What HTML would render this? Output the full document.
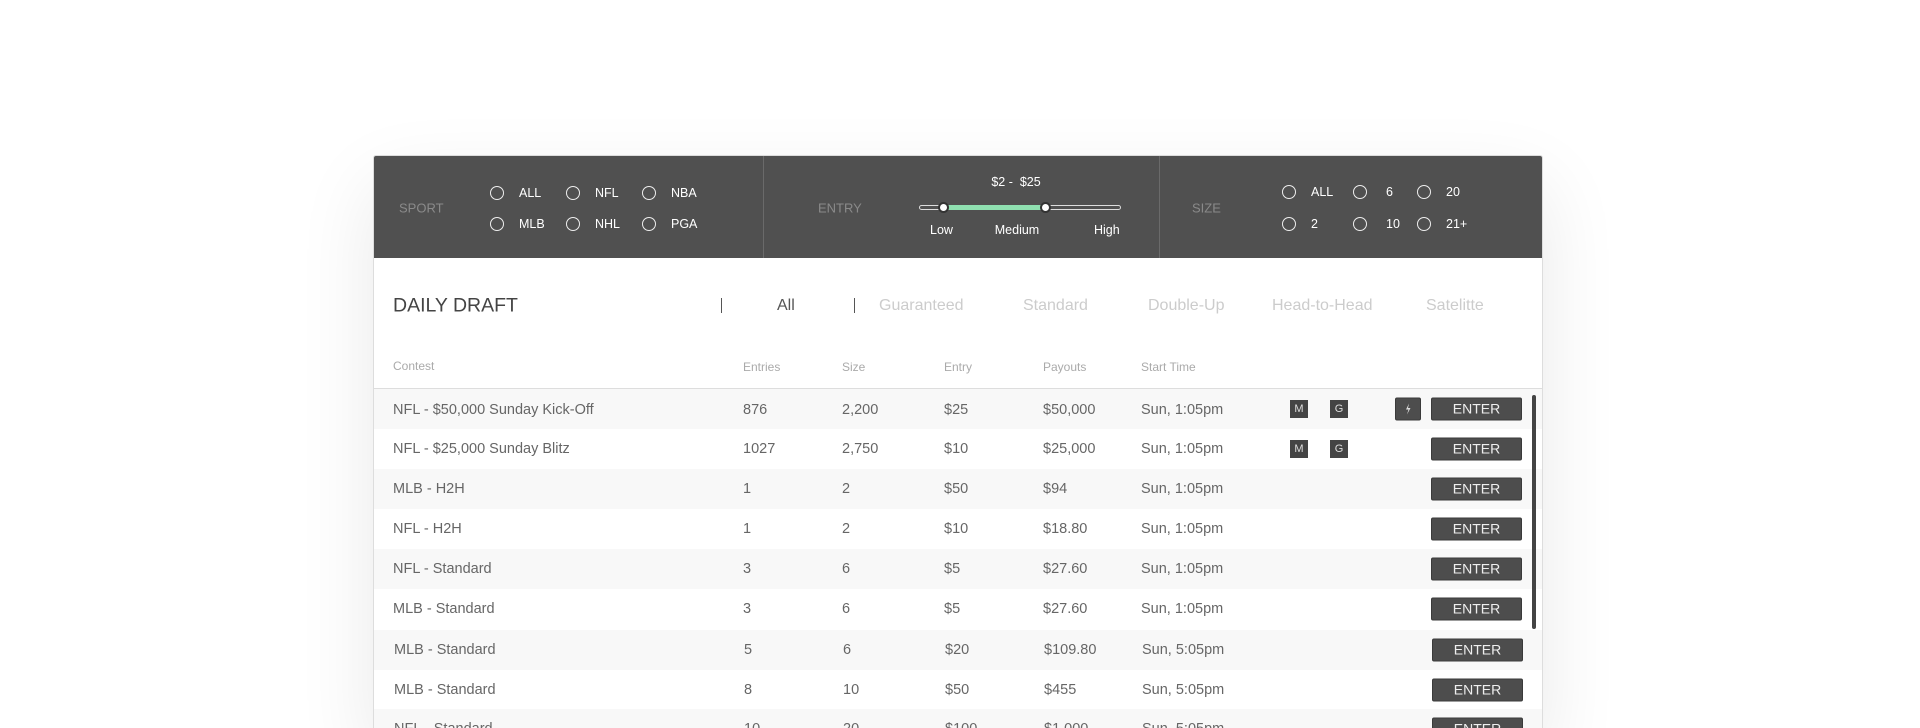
<!DOCTYPE html>
<html><head><meta charset="utf-8"><style>
*{margin:0;padding:0;box-sizing:border-box}
html,body{width:1920px;height:728px;overflow:hidden}
body{background:#fff;font-family:"Liberation Sans",sans-serif;position:relative}
.abs{position:absolute}
#panel{position:absolute;left:373px;top:155px;width:1170px;height:580px;background:#fff;border:1px solid #ddd;border-radius:3px;box-shadow:0 30px 80px rgba(0,0,0,.09);overflow:hidden}
#hdr{position:absolute;left:0;top:0;width:100%;height:102px;background:#505050}
.div{position:absolute;top:0;width:1px;height:102px;background:#6a6a6a}
.lbl{position:absolute;color:#8a8a8a;font-size:13px;transform:translateY(-50%)}
.rad{position:absolute;width:14px;height:14px;border:1.3px solid #eee;border-radius:50%;transform:translate(-50%,-50%)}
.rt{position:absolute;color:#fff;font-size:12.5px;transform:translateY(-50%)}
.t{position:absolute;transform:translateY(-50%);white-space:nowrap}
.row{position:absolute;left:0;width:100%;height:40px}
.cell{position:absolute;top:50%;transform:translateY(-50%);color:#666;font-size:14.5px;white-space:nowrap}
.badge{position:absolute;top:50%;transform:translate(-50%,-50%);width:18px;height:18px;background:#444;color:#ddd;font-size:11px;text-align:center;line-height:18px}
.btn{position:absolute;top:50%;transform:translateY(-50%);left:1057px;width:91px;height:23px;background:#4d4d4d;border:1px solid #3a3a3a;border-radius:2px;color:#eee;font-size:14px;text-align:center;line-height:21px}
.bolt{position:absolute;top:50%;transform:translateY(-50%);left:1021px;width:26px;height:23px;background:#4d4d4d;border-radius:2px;border:1px solid #3a3a3a}
</style></head><body>
<div id="panel">
 <div id="hdr">
  <div class="div" style="left:389px"></div>
  <div class="div" style="left:785px"></div>
  <div class="lbl" style="left:25px;top:52px">SPORT</div>
  <div class="rad" style="left:123px;top:37px"></div><div class="rt" style="left:145px;top:37px">ALL</div>
  <div class="rad" style="left:199px;top:37px"></div><div class="rt" style="left:221px;top:37px">NFL</div>
  <div class="rad" style="left:275px;top:37px"></div><div class="rt" style="left:297px;top:37px">NBA</div>
  <div class="rad" style="left:123px;top:68px"></div><div class="rt" style="left:145px;top:68px">MLB</div>
  <div class="rad" style="left:199px;top:68px"></div><div class="rt" style="left:221px;top:68px">NHL</div>
  <div class="rad" style="left:275px;top:68px"></div><div class="rt" style="left:297px;top:68px">PGA</div>
  <div class="lbl" style="left:444px;top:52px">ENTRY</div>
  <div class="rt" style="left:642px;top:26px;transform:translate(-50%,-50%)">$2 - &nbsp;$25</div>
  <div class="abs" style="left:545px;top:49px;width:202px;height:5px;border:1px solid #ddd;border-radius:3px"></div>
  <div class="abs" style="left:569px;top:49px;width:102px;height:5px;background:#8fe0b0"></div>
  <div class="abs" style="left:564px;top:46px;width:11px;height:11px;border-radius:50%;background:#fff;border:2.5px solid #333"></div>
  <div class="abs" style="left:666px;top:46px;width:11px;height:11px;border-radius:50%;background:#fff;border:2.5px solid #333"></div>
  <div class="rt" style="left:556px;top:74px">Low</div>
  <div class="rt" style="left:643px;top:74px;transform:translate(-50%,-50%)">Medium</div>
  <div class="rt" style="left:720px;top:74px">High</div>
  <div class="lbl" style="left:818px;top:52px">SIZE</div>
  <div class="rad" style="left:915px;top:36px"></div><div class="rt" style="left:937px;top:36px">ALL</div>
  <div class="rad" style="left:986px;top:36px"></div><div class="rt" style="left:1012px;top:36px">6</div>
  <div class="rad" style="left:1050px;top:36px"></div><div class="rt" style="left:1072px;top:36px">20</div>
  <div class="rad" style="left:915px;top:68px"></div><div class="rt" style="left:937px;top:68px">2</div>
  <div class="rad" style="left:986px;top:68px"></div><div class="rt" style="left:1012px;top:68px">10</div>
  <div class="rad" style="left:1050px;top:68px"></div><div class="rt" style="left:1072px;top:68px">21+</div>
 </div>
 <div class="t" style="left:19px;top:150px;font-size:19.5px;color:#444">DAILY DRAFT</div>
 <div class="abs" style="left:347px;top:142px;width:1px;height:15px;background:#555"></div>
 <div class="t" style="left:403px;top:150px;font-size:16px;color:#555">All</div>
 <div class="abs" style="left:480px;top:142px;width:1px;height:15px;background:#555"></div>
 <div class="t" style="left:505px;top:150px;font-size:16px;color:#ccc">Guaranteed</div>
 <div class="t" style="left:649px;top:150px;font-size:16px;color:#ccc">Standard</div>
 <div class="t" style="left:774px;top:150px;font-size:16px;color:#ccc">Double-Up</div>
 <div class="t" style="left:898px;top:150px;font-size:16px;color:#ccc">Head-to-Head</div>
 <div class="t" style="left:1052px;top:150px;font-size:16px;color:#ccc">Satelitte</div>
 <div class="t" style="left:19px;top:210px;font-size:12px;color:#aaa">Contest</div>
 <div class="t" style="left:369px;top:211px;font-size:12px;color:#aaa">Entries</div>
 <div class="t" style="left:468px;top:211px;font-size:12px;color:#aaa">Size</div>
 <div class="t" style="left:570px;top:211px;font-size:12px;color:#aaa">Entry</div>
 <div class="t" style="left:669px;top:211px;font-size:12px;color:#aaa">Payouts</div>
 <div class="t" style="left:767px;top:211px;font-size:12px;color:#aaa">Start Time</div>
 <div class="abs" style="left:0;top:232px;width:100%;height:1px;background:#ddd"></div>

 <div class="row" style="top:233px;background:#f8f8f8"><div class="cell" style="left:19px;top:52%">NFL - $50,000 Sunday Kick-Off</div><div class="cell" style="left:369px;top:52%">876</div><div class="cell" style="left:468px;top:52%">2,200</div><div class="cell" style="left:570px;top:52%">$25</div><div class="cell" style="left:669px;top:52%">$50,000</div><div class="cell" style="left:767px;top:52%">Sun, 1:05pm</div><div class="badge" style="left:925px">M</div><div class="badge" style="left:965px">G</div><div class="bolt"><svg width="24" height="21" viewBox="0 0 24 21"><path d="M13 5 L10 11 L12.5 11 L11 16 L14.5 9.5 L12 9.5 Z" fill="#ddd"/></svg></div><div class="btn">ENTER</div></div>
 <div class="row" style="top:273px;background:#fff"><div class="cell" style="left:19px">NFL - $25,000 Sunday Blitz</div><div class="cell" style="left:369px">1027</div><div class="cell" style="left:468px">2,750</div><div class="cell" style="left:570px">$10</div><div class="cell" style="left:669px">$25,000</div><div class="cell" style="left:767px">Sun, 1:05pm</div><div class="badge" style="left:925px">M</div><div class="badge" style="left:965px">G</div><div class="btn">ENTER</div></div>
 <div class="row" style="top:313px;background:#f8f8f8"><div class="cell" style="left:19px">MLB - H2H</div><div class="cell" style="left:369px">1</div><div class="cell" style="left:468px">2</div><div class="cell" style="left:570px">$50</div><div class="cell" style="left:669px">$94</div><div class="cell" style="left:767px">Sun, 1:05pm</div><div class="btn">ENTER</div></div>
 <div class="row" style="top:353px;background:#fff"><div class="cell" style="left:19px">NFL - H2H</div><div class="cell" style="left:369px">1</div><div class="cell" style="left:468px">2</div><div class="cell" style="left:570px">$10</div><div class="cell" style="left:669px">$18.80</div><div class="cell" style="left:767px">Sun, 1:05pm</div><div class="btn">ENTER</div></div>
 <div class="row" style="top:393px;background:#f8f8f8"><div class="cell" style="left:19px">NFL - Standard</div><div class="cell" style="left:369px">3</div><div class="cell" style="left:468px">6</div><div class="cell" style="left:570px">$5</div><div class="cell" style="left:669px">$27.60</div><div class="cell" style="left:767px">Sun, 1:05pm</div><div class="btn">ENTER</div></div>
 <div class="row" style="top:433px;background:#fff"><div class="cell" style="left:19px">MLB - Standard</div><div class="cell" style="left:369px">3</div><div class="cell" style="left:468px">6</div><div class="cell" style="left:570px">$5</div><div class="cell" style="left:669px">$27.60</div><div class="cell" style="left:767px">Sun, 1:05pm</div><div class="btn">ENTER</div></div>
 <div class="row" style="top:474px;background:#f8f8f8"><div class="cell" style="left:20px">MLB - Standard</div><div class="cell" style="left:370px">5</div><div class="cell" style="left:469px">6</div><div class="cell" style="left:571px">$20</div><div class="cell" style="left:670px">$109.80</div><div class="cell" style="left:768px">Sun, 5:05pm</div><div class="btn" style="left:1058px">ENTER</div></div>
 <div class="row" style="top:514px;background:#fff"><div class="cell" style="left:20px">MLB - Standard</div><div class="cell" style="left:370px">8</div><div class="cell" style="left:469px">10</div><div class="cell" style="left:571px">$50</div><div class="cell" style="left:670px">$455</div><div class="cell" style="left:768px">Sun, 5:05pm</div><div class="btn" style="left:1058px">ENTER</div></div>
 <div class="row" style="top:553px;background:#f8f8f8"><div class="cell" style="left:20px">NFL - Standard</div><div class="cell" style="left:370px">10</div><div class="cell" style="left:469px">20</div><div class="cell" style="left:571px">$100</div><div class="cell" style="left:670px">$1,000</div><div class="cell" style="left:768px">Sun, 5:05pm</div><div class="btn" style="left:1058px">ENTER</div></div>

 <div class="abs" style="left:1158px;top:239px;width:4px;height:234px;background:#444;border-radius:2px"></div>
</div>
</body></html>
